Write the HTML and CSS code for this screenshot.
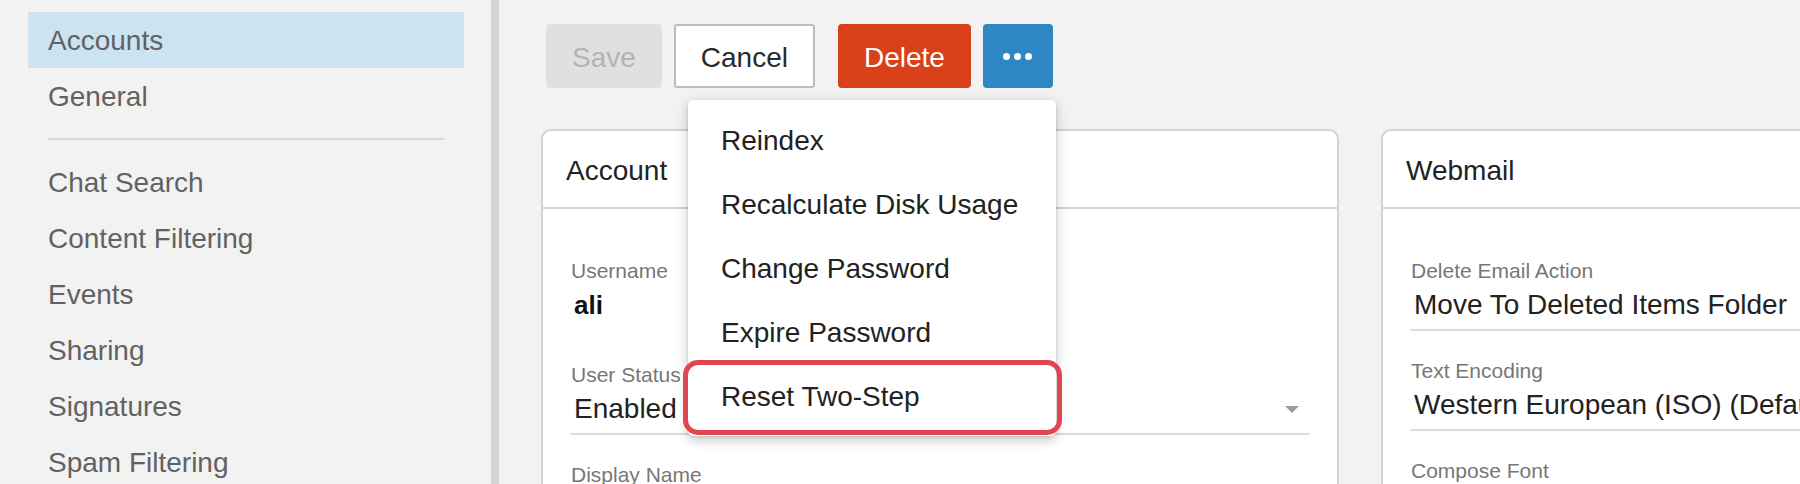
FILE: index.html
```html
<!DOCTYPE html>
<html lang="en">
<head>
<meta charset="utf-8">
<title>Accounts</title>
<link rel="stylesheet" href="styles.css">
</head>
<body>
<div class="layout">
  <nav class="sidebar">
    <ul class="nav-list">
      <li class="nav-item active">Accounts</li>
      <li class="nav-item">General</li>
      <li class="nav-sep"></li>
      <li class="nav-item">Chat Search</li>
      <li class="nav-item">Content Filtering</li>
      <li class="nav-item">Events</li>
      <li class="nav-item">Sharing</li>
      <li class="nav-item">Signatures</li>
      <li class="nav-item">Spam Filtering</li>
    </ul>
  </nav>
  <main class="main">
    <div class="toolbar">
      <button class="btn btn-save">Save</button>
      <button class="btn btn-cancel">Cancel</button>
      <button class="btn btn-delete">Delete</button>
      <button class="btn btn-more" aria-label="More"><span class="dot"></span><span class="dot"></span><span class="dot"></span></button>
      <div class="menu">
        <div class="menu-item">Reindex</div>
        <div class="menu-item">Recalculate Disk Usage</div>
        <div class="menu-item">Change Password</div>
        <div class="menu-item">Expire Password</div>
        <div class="menu-item">Reset Two-Step</div>
        <div class="menu-mark"></div>
      </div>
    </div>
    <div class="cards">
      <section class="card">
        <header class="card-header">Account</header>
        <div class="card-body">
          <div class="field readonly">
            <div class="field-label">Username</div>
            <div class="field-value">ali</div>
          </div>
          <div class="field">
            <div class="field-label">User Status</div>
            <div class="field-value select"><span>Enabled</span><span class="caret"></span></div>
          </div>
          <div class="field">
            <div class="field-label">Display Name</div>
            <div class="field-value"></div>
          </div>
        </div>
      </section>
      <section class="card">
        <header class="card-header">Webmail</header>
        <div class="card-body">
          <div class="field">
            <div class="field-label">Delete Email Action</div>
            <div class="field-value">Move To Deleted Items Folder</div>
          </div>
          <div class="field">
            <div class="field-label">Text Encoding</div>
            <div class="field-value">Western European (ISO) (Default)</div>
          </div>
          <div class="field">
            <div class="field-label">Compose Font</div>
            <div class="field-value"></div>
          </div>
        </div>
      </section>
    </div>
  </main>
</div>
</body>
</html>
```
FILE: styles.css
```css
* { box-sizing: border-box; }

html, body {
  margin: 0;
  height: 484px;
  overflow: hidden;
  background: #f2f2f2;
  font-family: "Liberation Sans", Arial, sans-serif;
}

.layout {
  display: flex;
  height: 484px;
}

.sidebar {
  width: 499px;
  flex-shrink: 0;
  padding: 12px 27px 0 28px;
  border-right: 8px solid #d4d4d4;
}

.nav-list {
  list-style: none;
  margin: 0;
  padding: 0;
}

.nav-item {
  height: 56px;
  line-height: 56px;
  padding: 1px 0 0 20px;
  font-size: 28px;
  color: #626262;
}

.nav-item.active {
  background: #cce4f1;
}

.nav-sep {
  height: 2px;
  margin: 14px 20px;
  background: #d6d6d6;
}

.main {
  flex: 1;
  min-width: 0;
  overflow: hidden;
  padding: 24px 0 0 42px;
}

.toolbar {
  position: relative;
  display: flex;
  gap: 12px;
  margin-left: 5px;
}

.btn {
  height: 64px;
  padding: 3px 24px 0;
  border: 2px solid transparent;
  border-radius: 4px;
  font-family: inherit;
  font-size: 28px;
}

.btn-save {
  background: #e0e0e0;
  color: #b3b3b3;
}

.btn-cancel {
  padding: 3px 25px 0;
  background: #fff;
  border-color: #bdbdbd;
  color: #2a2a2a;
  border-radius: 3px;
}

.btn-delete {
  margin-left: 11px;
  background: #d9411a;
  color: #fff;
}

.btn-more {
  width: 70px;
  padding: 0;
  background: #2e87c3;
  display: flex;
  align-items: center;
  justify-content: center;
  gap: 4px;
}

.dot {
  width: 7px;
  height: 7px;
  border-radius: 50%;
  background: #fff;
}

.menu {
  position: absolute;
  left: 142px;
  top: 76px;
  width: 368px;
  padding: 8px 0;
  background: #fff;
  border-radius: 5px;
  box-shadow: 0 4px 12px rgba(0, 0, 0, 0.22), 0 1px 3px rgba(0, 0, 0, 0.12);
  z-index: 10;
}

.menu-item {
  height: 64px;
  line-height: 64px;
  padding: 1px 0 0 33px;
  font-size: 28px;
  color: #222;
  white-space: nowrap;
}

.menu-mark {
  position: absolute;
  left: -5px;
  top: 260px;
  width: 379px;
  height: 75px;
  border: 5px solid #df4650;
  border-radius: 15px;
}

.cards {
  display: flex;
  gap: 42px;
  margin-top: 41px;
}

.card {
  width: 798px;
  flex-shrink: 0;
  height: 400px;
  background: #fff;
  border: 2px solid #d2d2d2;
  border-radius: 10px;
}

.card-header {
  height: 78px;
  line-height: 76px;
  padding: 2px 0 0 23px;
  border-bottom: 2px solid #d6d6d6;
  font-size: 28px;
  color: #222;
}

.card-body {
  padding: 50px 27px 0 27px;
}

.field {
  margin-bottom: 28px;
}

.field.readonly {
  margin-bottom: 32px;
}

.field-label {
  padding-left: 1px;
  font-size: 21px;
  line-height: 24px;
  color: #777;
  white-space: nowrap;
}

.field-value {
  height: 48px;
  line-height: 44px;
  padding: 0 4px 2px;
  border-bottom: 2px solid #dcdcdc;
  font-size: 28px;
  color: #222;
  white-space: nowrap;
}

.readonly .field-value {
  border-bottom-color: transparent;
  font-size: 26px;
  font-weight: bold;
  color: #111;
}

.field-value.select {
  display: flex;
  align-items: center;
  justify-content: space-between;
}

.caret {
  width: 0;
  height: 0;
  margin-right: 7px;
  border-left: 7px solid transparent;
  border-right: 7px solid transparent;
  border-top: 7px solid #9a9a9a;
}
```
